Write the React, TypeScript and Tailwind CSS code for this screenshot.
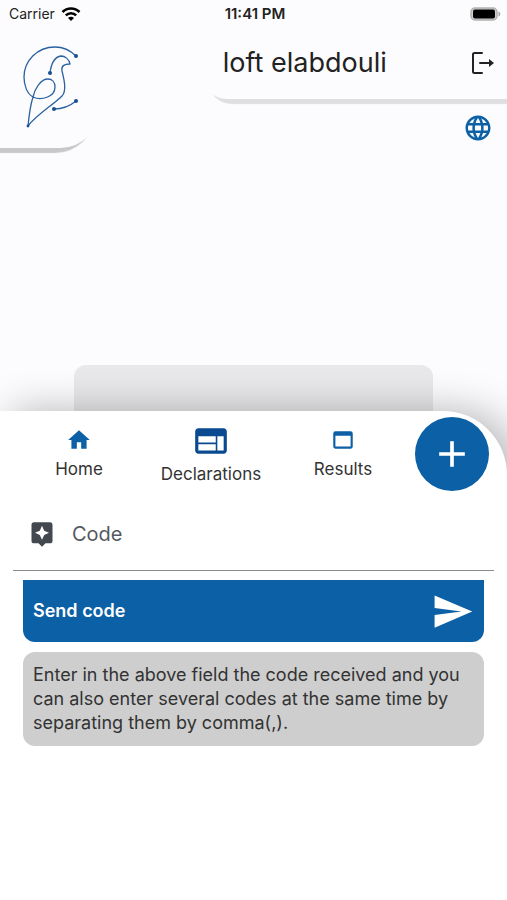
import { MdAdd, MdAssistant, MdHome, MdLanguage, MdSend, MdWeb, MdWebAsset } from "react-icons/md";

function StatusBar() {
  return (
    <div className="grid h-7 grid-cols-3 items-center pr-1.5 pl-[9px] text-sm text-[#222]">
      <div className="flex items-center gap-1.5">
        <span>Carrier</span>
        <svg width="20" height="14" viewBox="0 0 20 14" fill="none" stroke="#000" strokeWidth="2.6" aria-label="Wi-Fi">
          <path d="M1.500 5a12 12 0 0 1 17 0" />
          <path d="M4.800 8.400a7.400 7.400 0 0 1 10.400 0" />
          <path d="M10 14l-3-3a4.200 4.200 0 0 1 6 0z" fill="#000" stroke="none" />
        </svg>
      </div>
      <span className="text-center text-[15px] font-semibold">11:41 PM</span>
      <svg className="justify-self-end" width="31" height="15" viewBox="0 0 31 15" aria-label="Battery">
        <rect x="1" y="1" width="26" height="12" rx="4" fill="#d0d0d0" stroke="#b0b0b0" strokeWidth="1.5" />
        <rect x="3" y="2.500" width="22" height="9" rx="2" fill="#000" />
        <path d="M28.500 4.500c2.400 1 2.400 4 0 5z" fill="#a5a5a5" />
      </svg>
    </div>
  );
}

function BirdLogo() {
  return (
    <svg width="56" height="84" viewBox="0 0 56 84" fill="none" stroke="#2a62a0" strokeWidth="1.3" strokeLinejoin="round" aria-label="Pigeon logo">
      <path d="M53 10C47 4 40 1 32 1C14 1 1 15 1 31C1 39 4 48 10 51C18 55 32 51 32 41C32 36 29 33 25 33C18 33 12 42 10 51C7 60 6 70 5 80C14 68 29 60 39 50C44 45 41 33 39 25C38 20 41 18 47 18C46 13 42 10 38 10C31 11 28 19 27 27" />
      <path d="M31 63C39 63 47 60 53 55" />
      <g fill="#174f91" stroke="none">
        <circle cx="53" cy="10" r="2" />
        <circle cx="27" cy="27" r="2" />
        <circle cx="31" cy="63" r="2" />
        <circle cx="53" cy="55" r="2" />
        <circle cx="5" cy="80" r="1.400" />
      </g>
    </svg>
  );
}

function LogoutIcon() {
  return (
    <svg width="24" height="24" viewBox="0 0 24 24" fill="none" stroke="#222" strokeWidth="2" strokeLinecap="round" aria-hidden="true">
      <path d="M11 2H3.500Q2 2 2 3.500V20.500Q2 22 3.500 22H11" />
      <path d="M9 12H19" />
      <path d="M18 8l5 4-5 4z" fill="#222" stroke="none" />
    </svg>
  );
}

export default function App() {
  return (
    <div className="flex min-h-screen flex-col overflow-hidden bg-[#fcfcfe] font-['Inter',sans-serif] text-[#333]">
      <StatusBar />
      <header className="flex items-start justify-between">
        <div className="h-30 w-25 rounded-br-[40px] bg-[#fcfcfe] pt-[18px] pl-[23px] shadow-[-5px_5px_1px_#c8c8ca]">
          <BirdLogo />
        </div>
        <div className="w-[60%]">
          <div className="flex h-[71px] items-center justify-between rounded-bl-[24px] bg-[#fcfcfe] pr-3 pb-0.5 pl-5 shadow-[5px_5px_1px_#dfdfe1]">
            <h1 className="text-[27px] leading-8 text-[#222]">loft elabdouli</h1>
            <button aria-label="Log out">
              <LogoutIcon />
            </button>
          </div>
          <div className="flex justify-end pt-3.5 pr-3.5">
            <button aria-label="Language">
              <MdLanguage size={30} color="#0c60a5" />
            </button>
          </div>
        </div>
      </header>

      <div className="mx-[74px] mt-[217px] h-[46px] rounded-t-xl bg-[#e9e9eb]" />

      <main className="relative flex-1 rounded-tr-[64px] bg-white pb-10 shadow-[12px_0_40px_#00000048]">
        <nav className="flex items-start pt-[6px] pr-[18px] pl-[13px] text-[17px] leading-6">
          <a href="#home" className="flex flex-1 flex-col items-center gap-1 pt-[10px]">
            <MdHome size={26} color="#0c60a5" />
            Home
          </a>
          <a href="#declarations" className="flex flex-1 flex-col items-center gap-0.5 pt-[5px]">
            <MdWeb size={38} color="#0b4a90" />
            Declarations
          </a>
          <a href="#results" className="flex flex-1 flex-col items-center gap-1 pt-[10px]">
            <MdWebAsset size={26} color="#0c60a5" />
            Results
          </a>
          <button aria-label="Add" className="ml-1.5 flex size-[74px] items-center justify-center rounded-full bg-[#0c60a5]">
            <MdAdd size={44} color="#fff" />
          </button>
        </nav>
        <form className="px-[13px]" onSubmit={(e) => e.preventDefault()}>
          <div className="flex h-20 items-center gap-4 border-b border-[#8c8c8c] pt-1.5 pl-[15px]">
            <label htmlFor="code">
              <MdAssistant size={28} color="#43474e" title="Code" />
            </label>
            <input id="code" placeholder="Code" className="min-w-0 flex-1 text-xl outline-none placeholder:text-[#55585e]" />
          </div>
          <div className="flex flex-col gap-2.5 px-2.5 pt-[9px]">
            <button className="flex h-[62px] items-center justify-between rounded-b-xl bg-[#0c60a5] px-2.5 text-lg font-semibold text-white">
              Send code
              <MdSend size={43} />
            </button>
            <p className="rounded-xl bg-[#cecece] px-2.5 py-[11px] text-lg leading-6">
              Enter in the above field the code received and you can also enter several codes at the same time by
              separating them by comma(,).
            </p>
          </div>
        </form>
      </main>
    </div>
  );
}
